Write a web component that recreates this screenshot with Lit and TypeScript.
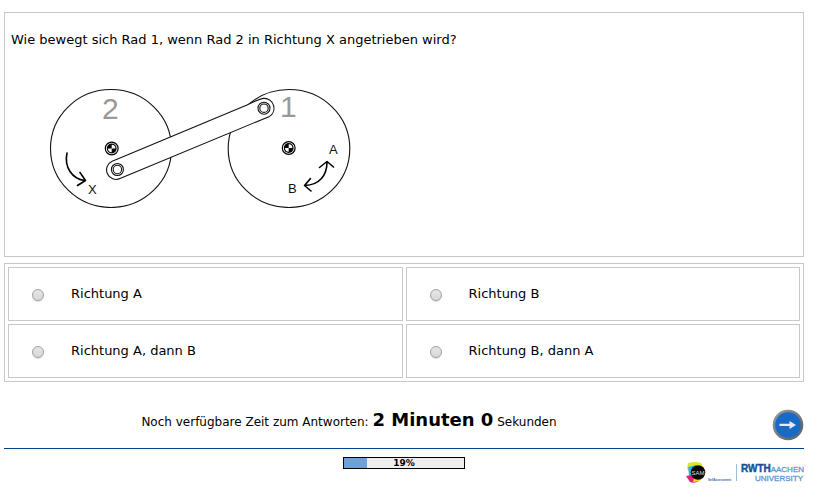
import { LitElement, html, svg, css } from "lit";
import { customElement, property, state } from "lit/decorators.js";

@customElement("wheel-diagram")
class WheelDiagram extends LitElement {
  static styles = css`
    :host { display: block; }
    svg { display: block; width: 302px; height: 120px; }
    .line { fill: none; stroke: #111; stroke-width: 1.1; }
    .body { fill: #fff; stroke: #111; stroke-width: 1.1; }
    .arrow { fill: none; stroke: #000; stroke-width: 1.6; stroke-linecap: round; stroke-linejoin: round; }
    .number { font: 30px "Liberation Sans", Arial, sans-serif; fill: #999; }
    .letter { font: 13px "Liberation Sans", Arial, sans-serif; fill: #111; }
  `;

  private hub(x: number, y: number) {
    return svg`<g transform="translate(${x} ${y})">
      <circle r="6.4" fill="#fff" stroke="#000" stroke-width="1.2"></circle>
      <circle r="4.9" fill="#000"></circle>
      <path d="M0 0V-3.7A3.7 3.7 0 0 0 -3.7 0Z M0 0V3.7A3.7 3.7 0 0 0 3.7 0Z" fill="#fff" transform="scale(-1 1)"></path>
    </g>`;
  }

  private pin(x: number, y: number) {
    return svg`<circle class="body" cx=${x} cy=${y} r="6"></circle>
      <circle class="body" cx=${x} cy=${y} r="4.2"></circle>`;
  }

  render() {
    return html`<svg viewBox="49 88 302 120" role="img" aria-label="Rad 2 und Rad 1, durch eine Stange verbunden">
      <ellipse class="line" cx="111" cy="148.5" rx="60.5" ry="59"></ellipse>
      <ellipse class="line" cx="289" cy="148.5" rx="60.8" ry="59"></ellipse>
      <path class="body" d="M112.2 161.2L247 105Q259 99 264 98.4A9.8 9.8 0 0 1 269.5 116.4L120 178.6A9.4 9.4 0 0 1 112.2 161.2Z"></path>
      ${this.pin(117.4, 169.5)} ${this.pin(264, 108.2)}
      ${this.hub(111.7, 148.5)} ${this.hub(288.7, 148)}
      <text class="number" x="102" y="119">2</text>
      <text class="number" x="280" y="117">1</text>
      <path class="arrow" d="M67 153C64 167 72 179 85 180.5M80 172.5L85.5 180.5L77.5 185.5"></path>
      <path class="arrow" d="M327 162C327 176 319 185 305 185.5M319.5 167.5L327 161.5L333.5 167M310.5 178.5L304.5 185.5L311 191"></path>
      <text class="letter" x="88" y="194">X</text>
      <text class="letter" x="329" y="154">A</text>
      <text class="letter" x="288" y="193">B</text>
    </svg>`;
  }
}

@customElement("answer-option")
class AnswerOption extends LitElement {
  @property() label = "";
  @property({ type: Boolean }) checked = false;

  static styles = css`
    :host { display: block; border: 1px solid #c8c8c8; }
    label { display: flex; align-items: center; height: 52px; padding-left: 23px; gap: 27px; }
    input {
      appearance: none; box-sizing: border-box; flex: none;
      width: 12px; height: 12px; margin: 2px 0 0; border: 1px solid #a0a0a0; border-radius: 50%;
      background: linear-gradient(#e6e6e6, #d8d8d8);
      box-shadow: 0 1px 1px #ddd;
    }
    input:checked { background: radial-gradient(#444 0 3px, #ddd 4px); }
  `;

  render() {
    return html`<label>
      <input type="radio" name="answer" .checked=${this.checked} />
      <span>${this.label}</span>
    </label>`;
  }
}

@customElement("app-root")
class AppRoot extends LitElement {
  @state() private selected = -1;
  private options = ["Richtung A", "Richtung B", "Richtung A, dann B", "Richtung B, dann A"];
  private progress = 19;

  static styles = css`
    :host {
      display: block; padding: 12px 16px 0 4px; background: #fff; color: #000;
      font: 13px/16px "DejaVu Sans", Verdana, sans-serif;
    }
    .question { border: 1px solid #c8c8c8; padding: 19px 6px 48px; }
    .question p { margin: 0 0 40px; }
    wheel-diagram { margin-left: 38px; }
    .options {
      display: grid; grid-template-columns: 1fr 1fr; gap: 3px;
      margin-top: 6px; padding: 3px; border: 1px solid #c8c8c8;
    }
    .timer { display: flex; align-items: center; margin-top: 26px; padding-bottom: 6px; border-bottom: 1px solid #00458c; }
    .time { flex: 1; margin: 0 0 8px; text-align: center; font-size: 12px; line-height: 24px; }
    .time strong { font-size: 18px; }
    .action { width: 110px; display: flex; justify-content: flex-end; }
    .next { width: 32px; height: 32px; padding: 0; border: 0; background: none; cursor: pointer; }
    .next svg { display: block; }
    .footer { display: grid; grid-template-columns: 1fr auto 1fr; align-items: start; padding-top: 8px; }
    .bar { position: relative; grid-column: 2; box-sizing: border-box; width: 122px; height: 12px; border: 1px solid #000; background: #eee; }
    .fill { height: 100%; background: #6f9fdc; }
    .percent { position: absolute; inset: 0; text-align: center; font-size: 9px; line-height: 10px; font-weight: bold; }
    .logos { display: flex; justify-content: flex-end; padding-top: 4px; }
    .logos svg { display: block; }
    .sam { font: 6px "Liberation Sans", sans-serif; fill: #ddd; }
    .self { font: bold 3px "Liberation Sans", sans-serif; fill: #3564a5; }
    .rwth { font: bold 10px "Liberation Sans", sans-serif; fill: #14509c; stroke: #14509c; stroke-width: 0.4; }
    .uni { font: 8px "Liberation Sans", sans-serif; fill: #5f95cf; stroke: #5f95cf; stroke-width: 0.3; }
  `;

  render() {
    return html`
      <section class="question">
        <p>Wie bewegt sich Rad 1, wenn Rad 2 in Richtung X angetrieben wird?</p>
        <wheel-diagram></wheel-diagram>
      </section>
      <section class="options">
        ${this.options.map((label, i) => html`<answer-option .label=${label} .checked=${this.selected === i}
          @click=${() => (this.selected = i)}></answer-option>`)}
      </section>
      <section class="timer">
        <p class="time">Noch verfügbare Zeit zum Antworten: <strong>2 Minuten 0</strong> Sekunden</p>
        <div class="action"><button class="next" aria-label="Weiter">
          <svg width="32" height="32" viewBox="0 0 32 32">
            <defs><linearGradient id="rim" x2="1" y2="1"><stop stop-color="#999"></stop><stop offset="1" stop-color="#555e68"></stop></linearGradient></defs>
            <circle cx="16" cy="16" r="15.3" fill="url(#rim)"></circle>
            <circle cx="16" cy="16" r="12.8" fill="#176bc6"></circle>
            <path d="M7.5 14.8H17.5V12L24 16L17.5 20V17H7.5Z" fill="#e8eaf0"></path>
          </svg></button></div>
      </section>
      <footer class="footer">
        <div class="bar"><div class="fill" style="width:${this.progress}%"></div><span class="percent">${this.progress}%</span></div>
        <div class="logos">
          <svg width="118" height="22" viewBox="686 461 118 22" role="img" aria-label="SAM, RWTH Aachen University">
            <path d="M688 463Q696 461 701 463L704 469L695 475L687 469Z" fill="#d8e92c"></path>
            <path d="M688 467L696 465L696 477L689 476Z" fill="#35b7dc"></path>
            <path d="M686 476L696 474L699 481Q694 484 690 482Z" fill="#dc247c"></path>
            <path d="M694 478L704 474L700 481L693 482Z" fill="#f2df27"></path>
            <circle cx="698" cy="472.5" r="7.3" fill="#080808"></circle>
            <text class="sam" x="698" y="475" text-anchor="middle">SAM</text>
            <text class="self" x="708" y="481">SelfAssessment</text>
            <path d="M736.5 464V481" stroke="#9dbddd"></path>
            <text class="rwth" x="741" y="472">RWTH</text>
            <text class="uni" x="804" y="472" text-anchor="end">AACHEN</text>
            <text class="uni" x="803" y="481" text-anchor="end">UNIVERSITY</text>
          </svg>
        </div>
      </footer>
    `;
  }
}
